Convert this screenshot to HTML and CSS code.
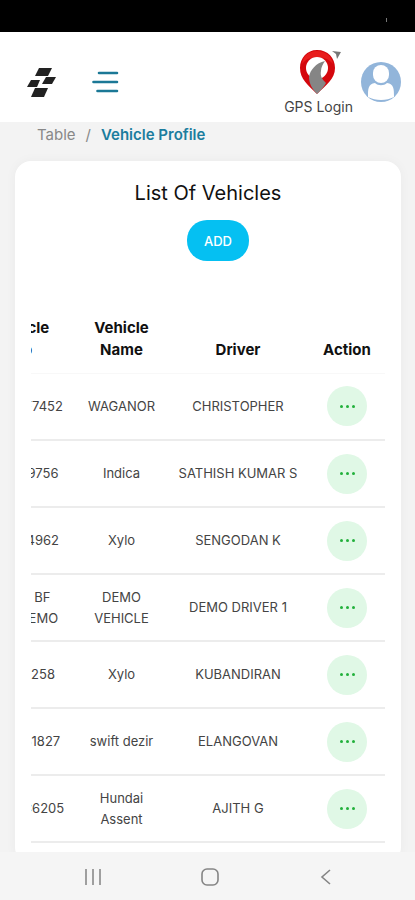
FILE: index.html
```
<!DOCTYPE html>
<html lang="en">
<head>
  <meta charset="UTF-8">
  <meta name="viewport" content="width=device-width, initial-scale=1.0">
  <title>Vehicle Profile</title>
  <link rel="stylesheet" href="styles.css">
</head>
<body>
  <div class="status-bar"><span class="status-dot"></span></div>

  <header class="topbar">
    <a href="#" class="logo" aria-label="Home">
      <svg width="30" height="30" viewBox="0 0 30 30" fill="#222">
        <path d="M13 1h13l-4 8H9z"/>
        <path d="M20 10h10l-4 7H16z"/>
        <path d="M5 13h9l-3 7H1z"/>
        <path d="M9 21h13l-4 9H5z"/>
      </svg>
    </a>
    <button class="menu-btn" aria-label="Menu">
      <svg width="28" height="22" viewBox="0 0 28 22" stroke="#1b7896" stroke-width="2.6" stroke-linecap="round">
        <path d="M7 2h18M1.500 11H25M5.500 20H25"/>
      </svg>
    </button>
    <a href="#" class="gps-login">
      <svg width="44" height="48" viewBox="0 0 44 48">
        <path d="M18 2C8 2 1 10 1 20c0 11 8 17 17 26 9-9 18-15 18-26C36 10 29 2 18 2z" fill="#d4070d"/>
        <path d="M18 3C10 3 4 8 3 16c4-5 9-7 15-7s12 2 16 7C33 8 26 3 18 3z" fill="#e81c1c"/>
        <circle cx="18" cy="20" r="11" fill="#fff"/>
        <path d="M26 13c-9 2-15 9-16 16 0 6 3 12 8 17 4-4 7-7 9-11-4-4-6-7-5-12 0-4 2-7 4-10z" fill="#858585"/>
        <path d="M33 3l9 1-4 7-1-5z" fill="#777"/>
      </svg>
      <span>GPS Login</span>
    </a>
    <button class="avatar" aria-label="Profile">
      <svg width="40" height="40" viewBox="0 0 40 40">
        <circle cx="20" cy="20" r="20" fill="#92b5da"/>
        <rect x="12" y="3" width="16" height="18" rx="8" fill="#fff"/>
        <path d="M7 35c0-8 0-13 7-14 3 3 9 3 12 0 7 1 7 6 7 14-4 2-8 3-13 3s-9-1-13-3z" fill="#fff"/>
      </svg>
    </button>
  </header>

  <main class="content">
    <nav class="breadcrumb">
      <a href="#">Table</a>
      <span class="sep">/</span>
      <a href="#" class="active">Vehicle Profile</a>
    </nav>

    <section class="card">
      <h1>List Of Vehicles</h1>
      <div class="card-tools">
        <button class="add-btn">ADD</button>
      </div>

      <!-- wide table, scrolled to its right end -->
      <div class="table-scroll">
        <table class="vehicles">
          <thead>
            <tr>
              <th class="col-no">Vehicle<br>No</th>
              <th class="col-name">Vehicle<br>Name</th>
              <th class="col-driver">Driver</th>
              <th class="col-action">Action</th>
            </tr>
          </thead>
          <tbody>
            <tr>
              <td>TN66AF7452</td>
              <td>WAGANOR</td>
              <td>CHRISTOPHER</td>
              <td><button class="more" aria-label="Actions"><i></i><i></i><i></i></button></td>
            </tr>
            <tr>
              <td>TN37B9756</td>
              <td>Indica</td>
              <td>SATHISH KUMAR S</td>
              <td><button class="more" aria-label="Actions"><i></i><i></i><i></i></button></td>
            </tr>
            <tr>
              <td>TN38L4962</td>
              <td>Xylo</td>
              <td>SENGODAN K</td>
              <td><button class="more" aria-label="Actions"><i></i><i></i><i></i></button></td>
            </tr>
            <tr>
              <td>TN 37 BF<br>1234 DEMO</td>
              <td>DEMO<br>VEHICLE</td>
              <td>DEMO DRIVER 1</td>
              <td><button class="more" aria-label="Actions"><i></i><i></i><i></i></button></td>
            </tr>
            <tr>
              <td>TN37B258</td>
              <td>Xylo</td>
              <td>KUBANDIRAN</td>
              <td><button class="more" aria-label="Actions"><i></i><i></i><i></i></button></td>
            </tr>
            <tr>
              <td>TN37J31827</td>
              <td>swift dezir</td>
              <td>ELANGOVAN</td>
              <td><button class="more" aria-label="Actions"><i></i><i></i><i></i></button></td>
            </tr>
            <tr>
              <td>TN66AC6205</td>
              <td>Hundai<br>Assent</td>
              <td>AJITH G</td>
              <td><button class="more" aria-label="Actions"><i></i><i></i><i></i></button></td>
            </tr>
          </tbody>
        </table>
      </div>
    </section>
  </main>

  <footer class="navbar">
    <button aria-label="Recents">
      <svg width="18" height="18" viewBox="0 0 18 18" stroke="#8a8a8a" stroke-width="1.6"><path d="M2 1v16M9 1v16M16 1v16"/></svg>
    </button>
    <button aria-label="Home">
      <svg width="18" height="18" viewBox="0 0 18 18" fill="none" stroke="#858585" stroke-width="1.6"><rect x="1" y="1" width="16" height="16" rx="5"/></svg>
    </button>
    <button aria-label="Back">
      <svg width="18" height="18" viewBox="0 0 18 18" fill="none" stroke="#858585" stroke-width="1.6"><path d="M13 2L5 9l8 7"/></svg>
    </button>
  </footer>
</body>
</html>
```
FILE: styles.css
```
* {
  box-sizing: border-box;
}

body {
  margin: 0;
  height: 100vh;
  display: flex;
  flex-direction: column;
  overflow: hidden;
  background: #f3f3f3;
  color: #444;
  font-family: Inter, "Open Sans", sans-serif;
  font-size: 13px;
  line-height: 21px;
}

button {
  padding: 0;
  border: none;
  background: none;
  font-family: inherit;
  cursor: pointer;
}

a {
  color: inherit;
  text-decoration: none;
}

svg {
  display: block;
}

.status-bar {
  flex: none;
  height: 32px;
  padding: 18px 28px 0 0;
  background: #000;
}

.status-dot {
  display: block;
  width: 1px;
  height: 4px;
  margin-left: auto;
  background: #777;
}

/* Header */
.topbar {
  flex: none;
  display: flex;
  align-items: center;
  height: 90px;
  padding: 10px 14px 0 26px;
  background: #fff;
}

.menu-btn {
  margin-left: 36px;
}

.gps-login {
  display: flex;
  flex-direction: column;
  align-items: center;
  margin: 0 8px 0 auto;
  font-size: 14px;
}

.gps-login svg {
  margin-left: 4px;
}

/* Content */
.content {
  flex: 1;
  min-height: 0;
  padding: 2px 14px 0 15px;
  overflow: hidden;
}

.breadcrumb {
  display: flex;
  gap: 10px;
  padding-left: 22px;
  color: #888;
  font-size: 15px;
}

.breadcrumb .active {
  color: #1b7d9e;
  font-weight: 600;
}

.card {
  margin-top: 16px;
  padding: 20px 16px;
  border-radius: 16px;
  background: #fff;
  box-shadow: 0 0 12px rgba(0, 0, 0, 0.04);
}

.card h1 {
  margin: 0;
  color: #111;
  font-size: 20px;
  font-weight: 400;
  line-height: 24px;
  text-align: center;
}

.card-tools {
  display: flex;
  justify-content: center;
  margin-top: 15px;
  padding-left: 20px;
}

.add-btn {
  width: 62px;
  height: 41px;
  border-radius: 20px;
  background: #05c0f2;
  color: #fff;
  font-size: 13px;
  font-weight: 500;
}

.table-scroll {
  display: flex;
  justify-content: flex-end;
  margin-top: 32px;
  overflow: hidden;
}

.vehicles {
  flex: none;
  border-collapse: collapse;
  table-layout: fixed;
  width: 417px;
  text-align: center;
}

.col-no { width: 108px; }
.col-name { width: 91px; }
.col-driver { width: 142px; }
.col-action { width: 76px; }

.vehicles th {
  height: 80px;
  padding: 0 0 12px;
  border-bottom: 1px solid #f8f8f8;
  color: #111;
  font-size: 15px;
  font-weight: 700;
  line-height: 22px;
  vertical-align: bottom;
}

.vehicles td {
  height: 67px;
  padding: 0;
  border-bottom: 2px solid #ececec;
  white-space: nowrap;
}

.more {
  display: flex;
  align-items: center;
  justify-content: center;
  gap: 3px;
  width: 40px;
  height: 40px;
  margin: 0 auto;
  border-radius: 50%;
  background: #e0f8e6;
}

.more i {
  width: 3px;
  height: 3px;
  border-radius: 50%;
  background: #22b03c;
}

/* Phone buttons */
.navbar {
  flex: none;
  display: flex;
  justify-content: space-between;
  align-items: center;
  height: 48px;
  padding: 2px 80px 0 84px;
  background: #f5f5f5;
}
```
